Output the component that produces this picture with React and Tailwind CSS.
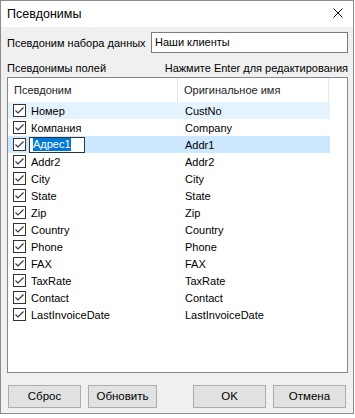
import React from "react";

const rows = [
  ["Номер", "CustNo"],
  ["Компания", "Company"],
  ["Адрес1", "Addr1"],
  ["Addr2", "Addr2"],
  ["City", "City"],
  ["State", "State"],
  ["Zip", "Zip"],
  ["Country", "Country"],
  ["Phone", "Phone"],
  ["FAX", "FAX"],
  ["TaxRate", "TaxRate"],
  ["Contact", "Contact"],
  ["LastInvoiceDate", "LastInvoiceDate"],
];

function Check() {
  return (
    <div className="w-[13px] h-[13px] border border-[#333333] bg-white shrink-0 flex items-center justify-center">
      <svg width="11" height="11" viewBox="0 0 11 11">
        <path d="M1.5 5.5 L4 8 L9.5 2.5" fill="none" stroke="#333333" strokeWidth="1.1" />
      </svg>
    </div>
  );
}

function Btn({ children, w = "w-[73px]" }) {
  return (
    <div className={w + " h-[23px] bg-[#e1e1e1] border border-[#adadad] flex items-center justify-center text-[11.5px] text-black"}>
      {children}
    </div>
  );
}

export default function App() {
  return (
    <div className="w-[355px] h-[418px] bg-white font-['Liberation_Sans',Arial,sans-serif] text-black whitespace-nowrap">
      <div className="w-[354px] h-[414px] border border-[#8c8c8c] bg-[#f0f0f0] flex flex-col">
        <div className="h-[26px] bg-white flex items-center justify-between pl-[6px] pr-[10px] shrink-0">
          <span className="text-[12.5px] leading-[16px]">Псевдонимы</span>
          <svg width="10" height="10" viewBox="0 0 10 10" className="mt-[-2px]">
            <path d="M0.5 0.5 L9.5 9.5 M9.5 0.5 L0.5 9.5" stroke="#111" strokeWidth="1" fill="none" />
          </svg>
        </div>
        <div className="flex flex-col pl-[6px] pr-[5px] pt-[5px] text-[11px]">
          <div className="flex items-center justify-between h-[21px]">
            <span className="leading-[16px]">Псевдоним набора данных</span>
            <div className="w-[197px] h-[21px] border border-[#7a7a7a] bg-white flex items-center pl-[3px]">
              Наши клиенты
            </div>
          </div>
          <div className="h-[24px] flex items-end justify-between pb-[1px] leading-[16px]">
            <span>Псевдонимы полей</span>
            <span>Нажмите Enter для редактирования</span>
          </div>
          <div className="w-[341px] h-[296px] border border-[#828790] bg-white flex flex-col">
            <div className="h-[24px] flex items-stretch shrink-0 text-[#222]">
              <div className="w-[170px] border-r border-[#e5e5e5] flex items-center pl-[6px]">Псевдоним</div>
              <div className="w-[151px] border-r border-[#e5e5e5] flex items-center pl-[6px]">Оригинальное имя</div>
            </div>
            {rows.map(([a, b], i) => (
              <div
                key={a}
                className={
                  "w-[322px] h-[17px] flex items-center " +
                  (i === 0 ? "bg-[#e5f3ff]" : i === 2 ? "bg-[#cce8ff]" : "")
                }
              >
                <div className="w-[171px] flex items-center pl-[5px] gap-[5px]">
                  <Check />
                  {i === 2 ? (
                    <div className="w-[56px] h-[16px] border border-[#333] bg-white flex items-center pl-[3px] ml-[-2px]">
                      <span className="bg-[#0078d7] text-white leading-[13px]">{a}</span>
                    </div>
                  ) : (
                    <span className="leading-[16px]">{a}</span>
                  )}
                </div>
                <span className="pl-[6px] leading-[16px]">{b}</span>
              </div>
            ))}
          </div>
          <div className="flex items-center mt-[12px] pl-[1px] pr-[2px]">
            <div className="flex gap-[7px]">
              <Btn>Сброс</Btn>
              <Btn w="w-[69px]">Обновить</Btn>
            </div>
            <div className="flex gap-[7px] ml-auto">
              <Btn>OK</Btn>
              <Btn>Отмена</Btn>
            </div>
          </div>
        </div>
      </div>
    </div>
  );
}
